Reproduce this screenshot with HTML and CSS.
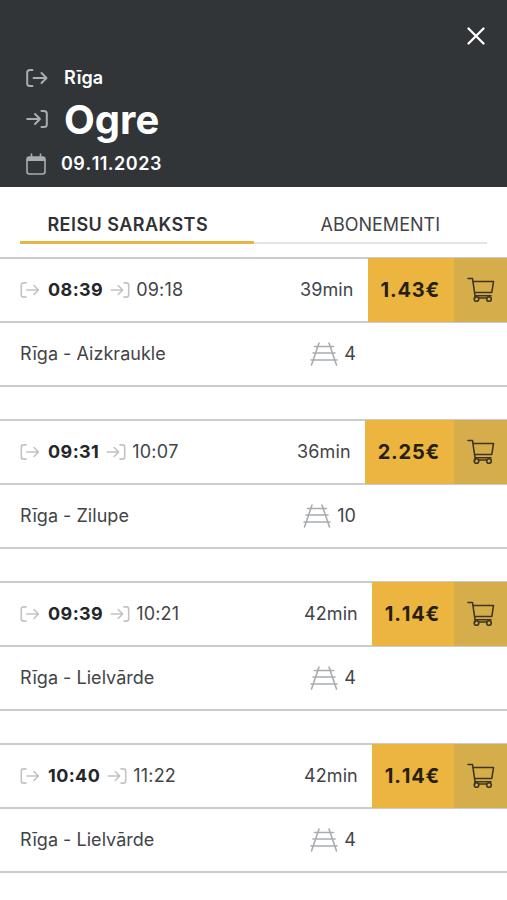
FILE: index.html
```html
<!DOCTYPE html>
<html lang="lv">
<head>
<meta charset="utf-8">
<title>Rīga – Ogre</title>
<link rel="stylesheet" href="styles.css">
</head>
<body>
<svg class="defs" aria-hidden="true">
  <symbol id="out" viewBox="0 0 22 18"><path d="M6.500 1H4Q1.200 1 1.200 3.500v11Q1.200 17 4 17H6.500M7.500 9H20.500M15.500 4l5 5-5 5"/></symbol>
  <symbol id="in" viewBox="0 0 22 18"><path d="M15.500 1h2.500q2.800 0 2.800 2.500v11q0 2.500-2.800 2.500h-2.500M1.200 9H14M9 4l5 5-5 5"/></symbol>
  <symbol id="cart" viewBox="0 0 28 26"><path d="M1 1.500h4.500L8 18.500M6.200 4.500H26.500L24.800 15.500H7.600M8 18.500V21M12 21h7.500M8 18.800H24"/><circle cx="9.500" cy="22" r="2.300"/><circle cx="22" cy="22" r="2.300"/></symbol>
  <symbol id="rail" viewBox="0 0 28 24"><path d="M9 1L1.500 23M19 1L26.500 23M4.500 4.500h19M3 11h22M1 18h26"/></symbol>
</svg>
<header class="header">
  <button class="close" aria-label="Aizvērt"><svg viewBox="0 0 18 18"><path d="M1.500 1.500l15 15M16.500 1.500l-15 15"/></svg></button>
  <div class="from"><svg class="head-icon"><use href="#out"/></svg><span>Rīga</span></div>
  <div class="to"><svg class="head-icon"><use href="#in"/></svg><span>Ogre</span></div>
  <div class="date"><svg class="calendar" viewBox="0 0 20 22"><rect x="1" y="4" width="18" height="17" rx="2.500"/><path class="solid" d="M1 4h18v4H1z"/><path d="M5.500 1v4M14.500 1v4"/></svg><span>09.11.2023</span></div>
</header>
<nav class="tabs"><a class="tab active">REISU SARAKSTS</a><a class="tab">ABONEMENTI</a></nav>
<main class="trips">
  <article class="trip">
    <div class="row">
      <svg class="time-icon"><use href="#out"/></svg><b class="depart">08:39</b><svg class="time-icon"><use href="#in"/></svg><span class="arrive">09:18</span>
      <span class="duration">39min</span><strong class="price">1.43€</strong><button class="buy"><svg><use href="#cart"/></svg></button>
    </div>
    <div class="info"><span class="route">Rīga - Aizkraukle</span><span class="track"><svg><use href="#rail"/></svg>4</span></div>
  </article>
  <article class="trip">
    <div class="row">
      <svg class="time-icon"><use href="#out"/></svg><b class="depart">09:31</b><svg class="time-icon"><use href="#in"/></svg><span class="arrive">10:07</span>
      <span class="duration">36min</span><strong class="price">2.25€</strong><button class="buy"><svg><use href="#cart"/></svg></button>
    </div>
    <div class="info"><span class="route">Rīga - Zilupe</span><span class="track"><svg><use href="#rail"/></svg>10</span></div>
  </article>
  <article class="trip">
    <div class="row">
      <svg class="time-icon"><use href="#out"/></svg><b class="depart">09:39</b><svg class="time-icon"><use href="#in"/></svg><span class="arrive">10:21</span>
      <span class="duration">42min</span><strong class="price">1.14€</strong><button class="buy"><svg><use href="#cart"/></svg></button>
    </div>
    <div class="info"><span class="route">Rīga - Lielvārde</span><span class="track"><svg><use href="#rail"/></svg>4</span></div>
  </article>
  <article class="trip">
    <div class="row">
      <svg class="time-icon"><use href="#out"/></svg><b class="depart">10:40</b><svg class="time-icon"><use href="#in"/></svg><span class="arrive">11:22</span>
      <span class="duration">42min</span><strong class="price">1.14€</strong><button class="buy"><svg><use href="#cart"/></svg></button>
    </div>
    <div class="info"><span class="route">Rīga - Lielvārde</span><span class="track"><svg><use href="#rail"/></svg>4</span></div>
  </article>
</main>
</body>
</html>
```
FILE: styles.css
```css
* { box-sizing: border-box; }
body { margin: 0; background: #fff; color: #424447; font: 18px/24px Inter, "Liberation Sans", sans-serif; height: 900px; overflow: hidden; }
svg { display: block; flex: none; fill: none; stroke: currentColor; stroke-width: 2; stroke-linecap: round; stroke-linejoin: round; }
.defs { position: absolute; width: 0; height: 0; }
button { border: 0; padding: 0; background: none; color: inherit; }

.header { position: relative; height: 187px; padding: 66px 26px 0; background: #313538; color: #fff; font-weight: 600; }
.close { position: absolute; top: 27px; right: 22px; }
.close svg { width: 18px; height: 18px; stroke-width: 2.300; }
.from, .to, .date { display: flex; align-items: center; }
.from { height: 24px; gap: 16px; letter-spacing: .1px; }
.to { height: 60px; gap: 16px; font-size: 40px; line-height: 60px; font-weight: 700; }
.date { height: 28px; gap: 15px; letter-spacing: .5px; font-kerning: none; }
.head-icon { width: 22px; height: 18px; color: #a9adb2; overflow: visible; }
.to .head-icon { margin-top: -2px; }
.calendar { width: 20px; height: 22px; color: #a9adb2; stroke-width: 1.600; }
.calendar .solid { fill: currentColor; stroke: none; }

.tabs { display: flex; height: 70px; padding: 0 20px; }
.tab { width: 50%; height: 57px; padding: 26px 0 0 20px; text-align: center; border-bottom: 2px solid #e3e4e6; letter-spacing: 0; }
.active { padding: 25px 18px 0 0; line-height: 25px; font-weight: 600; color: #303236; border-bottom: 3px solid #e8b445; letter-spacing: .45px; }

.trips { display: flex; flex-direction: column; gap: 32px; }
.trip { height: 130px; border-top: 2px solid #cbccce; border-bottom: 2px solid #cbccce; }
.row { display: flex; align-items: center; height: 64px; padding-left: 20px; border-bottom: 2px solid #cbccce; }
.time-icon { width: 20px; height: 16px; color: #c0c2c5; stroke-width: 1.800; }
.depart { margin: 0 8px; color: #242629; letter-spacing: .4px; }
.depart + .time-icon { margin-left: -1px; }
.arrive { margin-left: 6px; font-kerning: none; letter-spacing: .2px; }
.duration { margin-left: auto; margin-right: 14px; letter-spacing: .1px; }
.price { align-self: stretch; margin-top: -1px; margin-bottom: -1px; padding: 0 14px 0 13px; background: #ecb540; color: #251f14; font-size: 20px; line-height: 64px; letter-spacing: .8px; font-kerning: none; }
.buy { display: flex; justify-content: center; align-items: center; width: 53px; align-self: stretch; margin-top: -1px; margin-bottom: -1px; background: #d5ae4b; color: #3d351f; }
.buy svg { width: 28px; height: 26px; stroke-width: 1.600; }
.info { display: flex; justify-content: space-between; align-items: center; height: 62px; padding: 0 151px 0 20px; letter-spacing: .03px; }
.track { display: flex; align-items: center; gap: 6px; }
.track svg { width: 28px; height: 24px; color: #a9adb1; stroke-width: 1.600; }
```
